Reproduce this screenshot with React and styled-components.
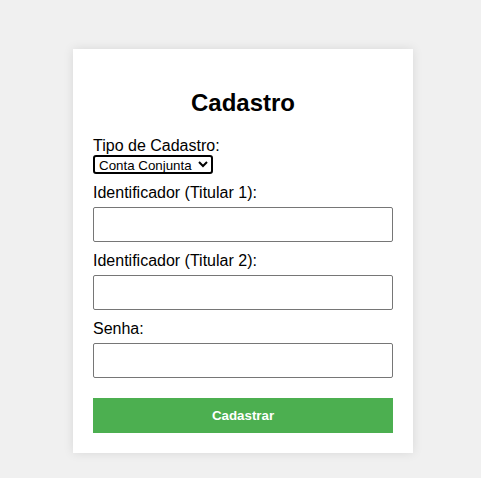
import React from 'react';
import styled, { createGlobalStyle } from 'styled-components';

const GlobalStyle = createGlobalStyle`
  html, body {
    margin: 0;
    background: #f0f0f0;
    font-family: "Liberation Sans", Arial, sans-serif;
  }
`;

const Page = styled.div`
  min-height: 478px;
  padding: 49px 0 0 73px;
  box-sizing: border-box;
`;

const Card = styled.form`
  width: 340px;
  box-sizing: border-box;
  padding: 20px;
  background: #fff;
  box-shadow: 0 0 10px rgba(0, 0, 0, 0.1);
`;

const Title = styled.h2`
  margin: 20px 0;
  font-size: 24px;
  line-height: 28px;
  text-align: center;
  color: #000;
`;

const Label = styled.label`
  display: block;
  font-size: 16px;
  line-height: 18px;
  color: #000;
  margin-bottom: ${props => (props.tight ? '0' : '5px')};
`;

const Select = styled.select`
  display: block;
  font-family: "Liberation Sans", Arial, sans-serif;
  font-size: 13.33px;
  height: 19px;
  padding: 0;
  margin-bottom: 10px;
  border: 2px solid #000;
  border-radius: 3px;
  background: #fff;
  color: #000;
`;

const Input = styled.input`
  display: block;
  width: 100%;
  height: 35px;
  box-sizing: border-box;
  margin: 0 0 10px;
  padding: 8px;
  border: 1px solid #767676;
  border-radius: 2px;
  font-size: 16px;
`;

const Button = styled.button`
  display: block;
  width: 100%;
  height: 35px;
  margin-top: 20px;
  border: none;
  background: #4caf50;
  color: #fff;
  font-family: "Liberation Sans", Arial, sans-serif;
  font-size: 13.33px;
  font-weight: bold;
  cursor: pointer;
`;

export default function App() {
  return (
    <>
      <GlobalStyle />
      <Page>
        <Card onSubmit={e => e.preventDefault()}>
          <Title>Cadastro</Title>
          <Label tight htmlFor="tipo">Tipo de Cadastro:</Label>
          <Select id="tipo" defaultValue="conjunta">
            <option value="individual">Conta Individual</option>
            <option value="conjunta">Conta Conjunta</option>
          </Select>
          <Label htmlFor="id1">Identificador (Titular 1):</Label>
          <Input id="id1" type="text" />
          <Label htmlFor="id2">Identificador (Titular 2):</Label>
          <Input id="id2" type="text" />
          <Label htmlFor="senha">Senha:</Label>
          <Input id="senha" type="password" />
          <Button type="submit">Cadastrar</Button>
        </Card>
      </Page>
    </>
  );
}
